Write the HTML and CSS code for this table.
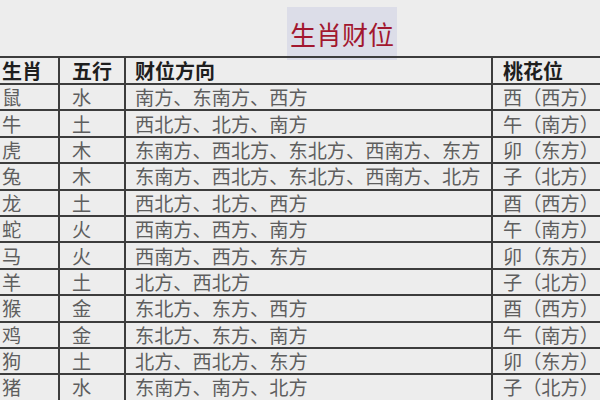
FILE: index.html
```html
<!DOCTYPE html>
<html lang="zh">
<head>
<meta charset="utf-8">
<link rel="stylesheet" href="styles.css">
</head>
<body>
<div class="title-wrap"><div class="title">生肖财位</div></div>
<table class="zodiac">
<colgroup><col class="w1"><col class="w2"><col class="w3"><col class="w4"></colgroup>
<thead>
<tr><th class="c1">生肖</th><th class="c2">五行</th><th class="c3">财位方向</th><th class="c4">桃花位</th></tr>
</thead>
<tbody>
<tr><td class="c1">鼠</td><td class="c2">水</td><td class="c3">南方、东南方、西方</td><td class="c4">西（西方）</td></tr>
<tr><td class="c1">牛</td><td class="c2">土</td><td class="c3">西北方、北方、南方</td><td class="c4">午（南方）</td></tr>
<tr><td class="c1">虎</td><td class="c2">木</td><td class="c3">东南方、西北方、东北方、西南方、东方</td><td class="c4">卯（东方）</td></tr>
<tr><td class="c1">兔</td><td class="c2">木</td><td class="c3">东南方、西北方、东北方、西南方、北方</td><td class="c4">子（北方）</td></tr>
<tr><td class="c1">龙</td><td class="c2">土</td><td class="c3">西北方、北方、西方</td><td class="c4">酉（西方）</td></tr>
<tr><td class="c1">蛇</td><td class="c2">火</td><td class="c3">西南方、西方、南方</td><td class="c4">午（南方）</td></tr>
<tr><td class="c1">马</td><td class="c2">火</td><td class="c3">西南方、西方、东方</td><td class="c4">卯（东方）</td></tr>
<tr><td class="c1">羊</td><td class="c2">土</td><td class="c3">北方、西北方</td><td class="c4">子（北方）</td></tr>
<tr><td class="c1">猴</td><td class="c2">金</td><td class="c3">东北方、东方、西方</td><td class="c4">酉（西方）</td></tr>
<tr><td class="c1">鸡</td><td class="c2">金</td><td class="c3">东北方、东方、南方</td><td class="c4">午（南方）</td></tr>
<tr><td class="c1">狗</td><td class="c2">土</td><td class="c3">北方、西北方、东方</td><td class="c4">卯（东方）</td></tr>
<tr><td class="c1">猪</td><td class="c2">水</td><td class="c3">东南方、南方、北方</td><td class="c4">子（北方）</td></tr>
</tbody>
</table>
</body>
</html>
```
FILE: styles.css
```css
html, body {
  margin: 0;
  padding: 0;
  background: #ededed;
  overflow: hidden;
}
body {
  width: 600px;
  height: 400px;
  font-family: "Noto Sans CJK SC", "Noto Sans", sans-serif;
}
.title-wrap {
  padding: 7px 0 0 287px;
  height: 55px;
  box-sizing: border-box;
}
.title {
  width: 110px;
  height: 53px;
  background: #dcdde8;
  color: #a2172f;
  font-size: 26px;
  line-height: 53px;
  text-align: center;
}
.zodiac {
  border-collapse: collapse;
  table-layout: fixed;
  width: 602px;
  margin: 1px 0 0 -1px;
}
.w1 { width: 60px; }
.w2 { width: 66px; }
.w3 { width: 367px; }
.w4 { width: 109px; }
.zodiac th, .zodiac td {
  border: 2px solid #3d3d3d;
  padding: 0;
  text-align: left;
  vertical-align: middle;
  line-height: 20px;
  white-space: nowrap;
}
.zodiac th {
  height: 25px;
  font-size: 20px;
  color: #1e1e1e;
  font-weight: 700;
}
.zodiac td {
  height: 24.4px;
  font-size: 19.2px;
  color: #5e5e5e;
  font-weight: 400;
}
.zodiac tr > :first-child { border-left: none; }
.zodiac tr > :last-child { border-right: none; }
.zodiac .c1 { padding-left: 3px; }
.zodiac .c2 { padding-left: 12px; }
.zodiac .c3 { padding-left: 9px; }
.zodiac .c4 { padding-left: 10px; }
```
